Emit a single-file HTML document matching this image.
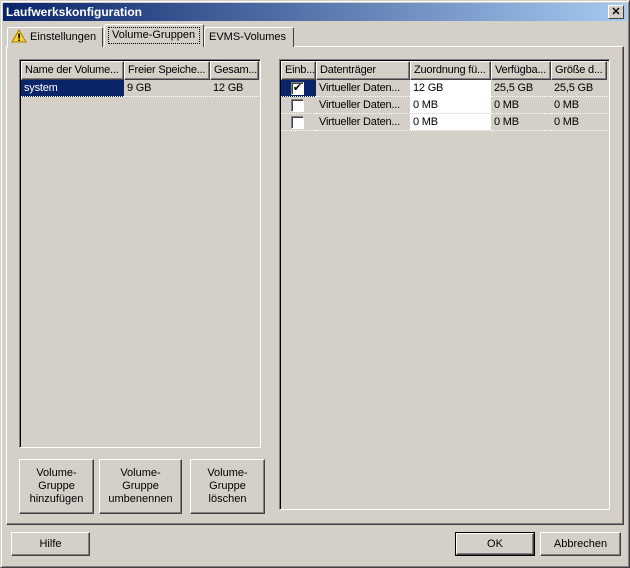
<!DOCTYPE html>
<html><head><meta charset="utf-8"><style>
*{box-sizing:border-box;margin:0;padding:0}
body{width:630px;height:568px;background:#d4d0c8;font-family:"Liberation Sans",Tahoma,sans-serif;font-size:11px;color:#000;position:relative;overflow:hidden}
.a{position:absolute;white-space:nowrap}
.win{left:0;top:0;width:630px;height:568px;border:1px solid;border-color:#d4d0c8 #404040 #404040 #d4d0c8;box-shadow:inset 1px 1px 0 #fff,inset -1px -1px 0 #808080}
.title{left:3px;top:3px;width:624px;height:18px;background:linear-gradient(90deg,#0a246a,#a6caf0);color:#fff;font-weight:bold;font-size:12px;line-height:18px;padding-left:3px}
.close{left:608px;top:5px;width:16px;height:14px;background:#d4d0c8;border:1px solid;border-color:#fff #404040 #404040 #fff;font-size:11px;line-height:12px;text-align:center;font-weight:bold;color:#000}
.panel{left:6px;top:46px;width:618px;height:479px;border:1px solid;border-color:#fff #404040 #404040 #fff;box-shadow:inset -1px -1px 0 #808080}
.tab{height:20px;border:1px solid;border-bottom:none;border-color:#fff #404040 #404040 #fff;border-radius:2px 2px 0 0;line-height:18px;padding:0 4px;overflow:hidden}
.list{background:#d4d0c8;border:1px solid;border-color:#808080 #fff #fff #808080;box-shadow:inset 1px 1px 0 #000}
.hd{height:19px;border:1px solid;border-color:#fff #404040 #404040 #fff;box-shadow:inset -1px -1px 0 #808080;line-height:17px;padding-left:3px;overflow:hidden;letter-spacing:-0.2px}
.cell{height:17px;line-height:17px;padding-left:3px;border-bottom:1px dotted #fff;overflow:hidden;letter-spacing:-0.2px}
.btn{border:1px solid;border-color:#fff #404040 #404040 #fff;box-shadow:inset -1px -1px 0 #808080;text-align:center;font-size:11px}
.cb{width:13px;height:13px;background:#fff;border:1px solid;border-color:#808080 #fff #fff #808080;box-shadow:inset 1px 1px 0 #404040;font-size:11px;line-height:11px;text-align:center}
</style></head><body>
<div class="a win"></div>
<div class="a title">Laufwerkskonfiguration</div>
<div class="a close">✕</div>
<div class="a panel"></div>
<div class="a tab" style="left:7px;top:27px;width:96px;background:#d4d0c8;padding-left:3px"><svg width="16" height="14" viewBox="0 0 16 14" style="vertical-align:-3px"><path d="M8 1 L15 13 L1 13 Z" fill="#f8d030" stroke="#a08000"/><rect x="7.3" y="4.5" width="1.6" height="5" fill="#000"/><rect x="7.3" y="10.5" width="1.6" height="1.5" fill="#000"/></svg> Einstellungen</div>
<div class="a tab" style="left:104px;top:24px;width:100px;height:23px;background:#d4d0c8;z-index:2;padding:0 3px"><div style="border:1px dotted #000;margin-top:2px;line-height:15px;padding:0 3px">Volume-Gruppen</div></div>
<div class="a tab" style="left:204px;top:27px;width:90px;background:#d4d0c8">EVMS-Volumes</div>

<div class="a list" style="left:19px;top:59px;width:242px;height:389px"></div>
<div class="a hd" style="left:21px;top:61px;width:103px">Name der Volume...</div>
<div class="a hd" style="left:124px;top:61px;width:86px">Freier Speiche...</div>
<div class="a hd" style="left:210px;top:61px;width:49px">Gesam...</div>
<div class="a cell" style="left:21px;top:80px;width:103px;background:#0a246a;color:#fff">system</div>
<div class="a cell" style="left:124px;top:80px;width:86px">9 GB</div>
<div class="a cell" style="left:210px;top:80px;width:49px">12 GB</div>

<div class="a list" style="left:279px;top:59px;width:331px;height:451px"></div>
<div class="a hd" style="left:281px;top:61px;width:35px">Einb...</div>
<div class="a hd" style="left:316px;top:61px;width:94px">Datenträger</div>
<div class="a hd" style="left:410px;top:61px;width:81px">Zuordnung fü...</div>
<div class="a hd" style="left:491px;top:61px;width:60px">Verfügba...</div>
<div class="a hd" style="left:551px;top:61px;width:56px">Größe d...</div>

<div class="a cell" style="left:281px;top:80px;width:35px;background:#0a246a"></div>
<div class="a cell" style="left:281px;top:97px;width:35px"></div>
<div class="a cell" style="left:281px;top:114px;width:35px"></div>
<div class="a cb" style="left:291px;top:82px">✔</div>
<div class="a cb" style="left:291px;top:99px"></div>
<div class="a cb" style="left:291px;top:116px"></div>
<div class="a cell" style="left:316px;top:80px;width:94px">Virtueller Daten...</div>
<div class="a cell" style="left:316px;top:97px;width:94px">Virtueller Daten...</div>
<div class="a cell" style="left:316px;top:114px;width:94px">Virtueller Daten...</div>
<div class="a cell" style="left:410px;top:80px;width:81px;background:#fff">12 GB</div>
<div class="a cell" style="left:410px;top:97px;width:81px;background:#fff;border-color:#d4d0c8">0 MB</div>
<div class="a cell" style="left:410px;top:114px;width:81px;background:#fff;border-color:#d4d0c8">0 MB</div>
<div class="a cell" style="left:491px;top:80px;width:60px">25,5 GB</div>
<div class="a cell" style="left:491px;top:97px;width:60px">0 MB</div>
<div class="a cell" style="left:491px;top:114px;width:60px">0 MB</div>
<div class="a cell" style="left:551px;top:80px;width:56px">25,5 GB</div>
<div class="a cell" style="left:551px;top:97px;width:56px">0 MB</div>
<div class="a cell" style="left:551px;top:114px;width:56px">0 MB</div>

<div class="a btn" style="left:19px;top:459px;width:75px;height:55px;padding-top:7px;line-height:13px">Volume-<br>Gruppe<br>hinzufügen</div>
<div class="a btn" style="left:99px;top:459px;width:83px;height:55px;padding-top:7px;line-height:13px">Volume-<br>Gruppe<br>umbenennen</div>
<div class="a btn" style="left:190px;top:459px;width:75px;height:55px;padding-top:7px;line-height:13px">Volume-<br>Gruppe<br>löschen</div>

<div class="a btn" style="left:11px;top:532px;width:79px;height:24px;line-height:22px">Hilfe</div>
<div class="a btn" style="left:456px;top:533px;width:78px;height:22px;line-height:20px;outline:1px solid #000">OK</div>
<div class="a btn" style="left:540px;top:532px;width:81px;height:24px;line-height:22px">Abbrechen</div>
</body></html>
